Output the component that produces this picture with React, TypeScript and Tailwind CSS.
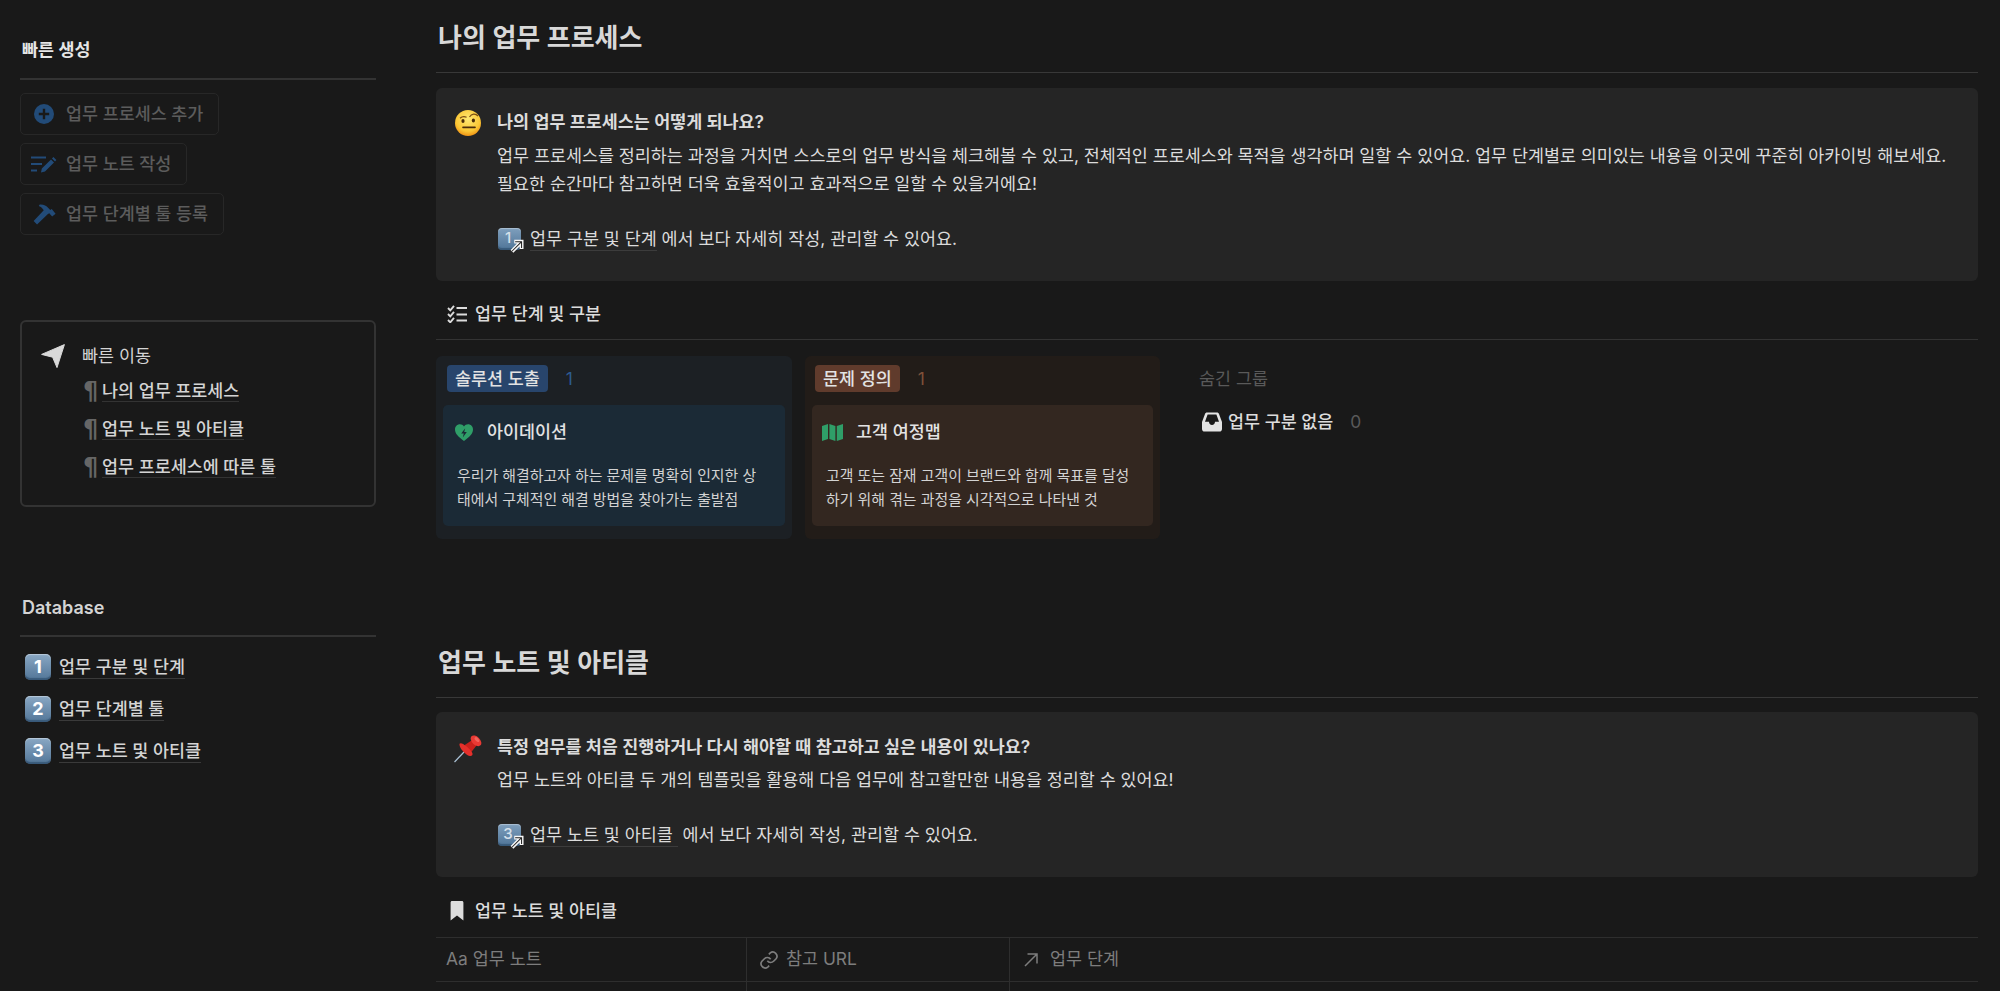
import React from "react";

const FONT = "[font-family:Inter,'Noto_Sans_CJK_KR',sans-serif]";

function Keycap({ n, small }: { n: string; small?: boolean }) {
  return (
    <span
      className={
        small
          ? "relative inline-flex h-[22px] w-[23px] shrink-0 items-center justify-center rounded-[4px] bg-gradient-to-b from-[#7f9fbd] to-[#4f7598] pb-[3px] pr-[3px] text-[15px] font-medium leading-none text-[#d5e0ea] shadow-[inset_0_1px_1px_rgba(255,255,255,0.35),inset_0_-2px_1px_rgba(30,60,90,0.5)]"
          : "relative inline-flex h-[26px] w-[26px] shrink-0 items-center justify-center rounded-[5px] bg-gradient-to-b from-[#8aa8c4] to-[#527698] text-[18px] font-bold leading-none text-white shadow-[inset_0_1px_1px_rgba(255,255,255,0.4),inset_0_-2px_1px_rgba(30,60,90,0.5)]"
      }
    >
      {n}
      {small && (
        <svg viewBox="0 0 14 14" className="absolute -bottom-[4px] -right-[4px] h-[16px] w-[16px]">
          <path d="M2.6 11.6 L10.4 3.8 M4.6 3.2 H11 V9.6" fill="none" stroke="#f8f8f8" strokeWidth="3.4" />
          <path d="M2.6 11.6 L10.4 3.8 M5.4 3.2 H11 V8.8" fill="none" stroke="#202020" strokeWidth="0.9" />
        </svg>
      )}
    </span>
  );
}

function PlusCircle() {
  return (
    <svg viewBox="0 0 20 20" className="h-5 w-5 shrink-0">
      <circle cx="10" cy="10" r="10" fill="#224b78" />
      <path d="M10 4.8 V15.2 M4.8 10 H15.2" stroke="#191919" strokeWidth="2.4" />
    </svg>
  );
}

function ComposeIcon() {
  return (
    <svg viewBox="0 0 26 17" className="h-[17px] w-[26px] shrink-0">
      <path d="M0 1.5 H15 M0 8 H11 M0 14.5 H6" stroke="#224b78" strokeWidth="2.2" />
      <path d="M10 16.5 L10.8 12.5 L20 3.5 L23 6.5 L14 15.6 Z M21 2.5 L22.4 1 L25.4 4 L24 5.5 Z" fill="#224b78" />
    </svg>
  );
}

function HammerIcon() {
  return (
    <svg viewBox="0 0 24 22" className="h-[21px] w-[23px] shrink-0">
      <path
        d="M7 0.5 C11 0.2 14 1.6 16 4.2 L18 6.2 L19.6 5.2 L23.6 10.2 L20 13.2 L17 9.6 L15.6 10.6 L4.2 21.6 L0.6 17.8 L11.2 6.6 L10 5 C8.8 3.4 7.6 2.4 6 2 Z"
        fill="#224b78"
      />
    </svg>
  );
}

function QuickButton({ icon, label, w }: { icon: React.ReactNode; label: string; w: string }) {
  return (
    <div className={`flex h-[42px] items-center rounded-[5px] border border-[#272727] ${w}`}>
      <div className="flex w-[45px] shrink-0 justify-center pl-[1px]">{icon}</div>
      <span className="whitespace-nowrap text-[17.4px] font-medium leading-none text-[#5c5c5c]">{label}</span>
    </div>
  );
}

function Anchor({ label }: { label: string }) {
  return (
    <div className="flex h-[38px] items-center pl-[61px]">
      <span className="w-[19px] text-[24px] font-bold leading-none text-[#666666] [font-family:'DejaVu_Sans',sans-serif]">¶</span>
      <span className="whitespace-nowrap border-b border-[#333333] text-[17.4px] font-medium leading-[21px] text-[#d4d4d4]">{label}</span>
    </div>
  );
}

function DbLink({ n, label }: { n: string; label: string }) {
  return (
    <div className="flex h-[42px] items-center pl-[5px]">
      <Keycap n={n} />
      <span className="ml-[8px] whitespace-nowrap border-b border-[#3a3a3a] text-[17.4px] font-medium leading-[22px] text-[#d4d4d4]">{label}</span>
    </div>
  );
}

function FaceEmoji() {
  return (
    <svg viewBox="0 0 26 26" className="h-[26px] w-[26px]">
      <defs>
        <radialGradient id="fg" cx="50%" cy="35%" r="65%">
          <stop offset="0%" stopColor="#fee873" />
          <stop offset="72%" stopColor="#fbc735" />
          <stop offset="100%" stopColor="#ef9315" />
        </radialGradient>
      </defs>
      <circle cx="13" cy="13" r="13" fill="url(#fg)" />
      <path d="M14.5 7 C16.5 3.6 20.5 3.2 23 6" fill="none" stroke="#7a4d14" strokeWidth="1.2" />
      <path d="M5 8.2 C7 6.4 9.5 6.4 11.6 7.2" fill="none" stroke="#7a4d14" strokeWidth="1.2" />
      <ellipse cx="8" cy="11" rx="1.6" ry="2" fill="#4b2c0a" />
      <ellipse cx="18.4" cy="10.4" rx="1.6" ry="2" fill="#4b2c0a" />
      <path d="M8 17.4 H20" stroke="#4b2c0a" strokeWidth="1.6" strokeLinecap="round" />
    </svg>
  );
}

function PinEmoji() {
  return (
    <svg viewBox="0 0 28 28" className="h-[28px] w-[28px]">
      <path d="M0.5 27 L10 17" stroke="#a9c0d4" strokeWidth="1.2" />
      <path d="M10 10.5 L17 17.5 L22.5 10.5 L17.5 5.5 Z" fill="#c9211c" />
      <path d="M5.5 8.8 C6.5 7.4 9 8.4 12 11 C15.6 14 18.4 17 18.6 19 C18.4 21.6 15.6 21.4 12.6 19.4 C8.6 16.4 5 12 5.5 8.8 Z" fill="#e5302b" />
      <ellipse cx="22" cy="5.8" rx="6.4" ry="4" transform="rotate(45 22 5.8)" fill="#ea3a34" />
      <ellipse cx="23" cy="4.6" rx="3" ry="1.6" transform="rotate(45 23 4.6)" fill="#f2645d" />
    </svg>
  );
}

function LinkLine({ n, label, trail }: { n: string; label: string; trail: string }) {
  return (
    <div className="flex h-[28px] items-center">
      <div className="flex w-[33px] shrink-0 pl-[1px]">
        <Keycap n={n} small />
      </div>
      <span className="whitespace-pre border-b border-[#3c3c3c] text-[17.4px] leading-[23px] text-[#dcdcdc]">{label}</span>
      <span className="whitespace-pre text-[17.4px] leading-[28px] text-[#dcdcdc]">{trail}</span>
    </div>
  );
}

function ChecklistIcon() {
  return (
    <svg viewBox="0 0 20 18" className="h-[18px] w-[20px]">
      <g fill="none" stroke="#dcdcdc" strokeWidth="1.9">
        <path d="M1 3 L3.3 5.3 L7 0.8" />
        <path d="M1 9 L3.3 11.3 L7 6.8" />
        <path d="M1 15 L3.3 17.3 L7 12.8" />
        <path d="M9.5 3 H20 M9.5 9.5 H20 M9.5 15.5 H20" />
      </g>
    </svg>
  );
}

function BookmarkIcon() {
  return (
    <svg viewBox="0 0 14 20" className="h-[20px] w-[14px]">
      <path d="M0.6 1.5 C0.6 0.6 1.2 0 2 0 H12 C12.8 0 13.4 0.6 13.4 1.5 V19.6 L7 14.6 L0.6 19.6 Z" fill="#dcdcdc" />
    </svg>
  );
}

function HeartBolt() {
  return (
    <svg viewBox="0 0 18 17" className="h-[17px] w-[18px]">
      <path d="M9 17 C3.5 12.8 0 9.6 0 5.4 C0 2.4 2.2 0.2 4.9 0.2 C6.6 0.2 8.1 1.1 9 2.5 C9.9 1.1 11.4 0.2 13.1 0.2 C15.8 0.2 18 2.4 18 5.4 C18 9.6 14.5 12.8 9 17 Z" fill="#2f9e68" />
      <path d="M10.2 4.2 L6.2 9.6 H8.8 L7.8 13.4 L11.8 8 H9.2 Z" fill="#1b2a36" />
    </svg>
  );
}

function MapIcon() {
  return (
    <svg viewBox="0 0 21 17" className="-ml-[2px] h-[17px] w-[21px]">
      <path d="M0 2 L6 0 V15 L0 17 Z M7.4 0 L13.4 2 V17 L7.4 15 Z M14.8 2 L21 0 V15 L14.8 17 Z" fill="#2f9e68" />
    </svg>
  );
}

function InboxIcon() {
  return (
    <svg viewBox="0 0 20 20" className="h-[20px] w-[20px]">
      <path
        fillRule="evenodd"
        d="M5 0.5 H15 C16 0.5 16.6 1 17 2 L20 10 V17 C20 18.6 18.8 19.6 17.4 19.6 H2.6 C1.2 19.6 0 18.6 0 17 V10 L3 2 C3.4 1 4 0.5 5 0.5 Z M5.6 2.6 L3 9.8 H7 C7 11.6 8.2 13 10 13 C11.8 13 13 11.6 13 9.8 H17 L14.4 2.6 Z"
        fill="#e3e3e3"
      />
    </svg>
  );
}

function Tag({ label, cls }: { label: string; cls: string }) {
  return (
    <span className={`inline-flex h-[27px] items-center rounded-[4px] px-[8px] text-[17.4px] font-medium leading-none ${cls}`}>
      {label}
    </span>
  );
}

function BoardColumn(p: {
  wrap: string;
  tagCls: string;
  tag: string;
  count: string;
  countCls: string;
  card: string;
  icon: React.ReactNode;
  title: string;
  l1: string;
  l2: string;
  tagPad: string;
  countPad: string;
}) {
  return (
    <div className={`h-[183px] rounded-[6px] pt-[9px] ${p.wrap}`}>
      <div className={`flex h-[27px] items-center ${p.tagPad}`}>
        <Tag label={p.tag} cls={p.tagCls} />
        <span className={`${p.countPad} text-[17.4px] leading-none ${p.countCls}`}>{p.count}</span>
      </div>
      <div className={`mx-[7px] mt-[13px] h-[121px] rounded-[5px] ${p.card}`}>
        <div className="flex h-[53px] items-center pl-[12px] pt-[1px]">
          <div className="flex w-[32px] shrink-0">{p.icon}</div>
          <span className="text-[17.4px] font-medium leading-none text-[#e3e3e3]">{p.title}</span>
        </div>
        <div className="pl-[14px] pt-[6px] text-[14.9px] leading-[24px] text-[#d3d3d3]">
          <div className="whitespace-nowrap">{p.l1}</div>
          <div className="whitespace-nowrap">{p.l2}</div>
        </div>
      </div>
    </div>
  );
}

function HeaderCell({ w, icon, label }: { w: string; icon: React.ReactNode; label: string }) {
  return (
    <div className={`flex h-[43px] items-center border-r border-[#2e2e2e] text-[17.4px] text-[#7d7d7d] ${w}`}>
      {icon}
      <span>{label}</span>
    </div>
  );
}

export default function App() {
  return (
    <div className={`flex h-[991px] w-[2000px] overflow-hidden bg-[#191919] ${FONT}`}>
      {/* sidebar */}
      <aside className="w-[436px] shrink-0 pl-[20px]">
        <div className="w-[356px]">
          <div className="flex h-[80px] items-end border-b-2 border-[#333333] pb-[17px] pl-[2px]">
            <span className="text-[17.4px] font-semibold leading-[22px] text-[#e6e6e6]">빠른 생성</span>
          </div>
          <div className="mt-[13px] flex flex-col gap-[8px]">
            <QuickButton icon={<PlusCircle />} label="업무 프로세스 추가" w="w-[199px]" />
            <QuickButton icon={<ComposeIcon />} label="업무 노트 작성" w="w-[167px]" />
            <QuickButton icon={<HammerIcon />} label="업무 단계별 툴 등록" w="w-[204px]" />
          </div>

          <div className="mt-[85px] h-[187px] rounded-[6px] border-2 border-[#333333] pt-[20px]">
            <div className="flex h-[28px] items-center pl-[19px]">
              <svg viewBox="0 0 24 24" className="h-[24px] w-[24px] shrink-0">
                <path d="M23.4 0.6 L0.6 10.4 L11.6 13.2 L16 23.6 Z" fill="#d9d9d9" stroke="#d9d9d9" strokeLinejoin="round" strokeWidth="1" />
              </svg>
              <span className="ml-[17px] text-[17.4px] leading-none text-[#d4d4d4]">빠른 이동</span>
            </div>
            <div className="mt-[2px]">
              <Anchor label="나의 업무 프로세스" />
              <Anchor label="업무 노트 및 아티클" />
              <Anchor label="업무 프로세스에 따른 툴" />
            </div>
          </div>

          <div className="mt-[85px] flex h-[45px] items-end border-b-2 border-[#333333] pb-[16px] pl-[2px]">
            <span className="text-[18px] font-semibold leading-[22px] text-[#d4d4d4]">Database</span>
          </div>
          <div className="mt-[9px]">
            <DbLink n="1" label="업무 구분 및 단계" />
            <DbLink n="2" label="업무 단계별 툴" />
            <DbLink n="3" label="업무 노트 및 아티클" />
          </div>
        </div>
      </aside>

      {/* main */}
      <main className="w-[1542px] shrink-0">
        <div className="flex h-[73px] items-end border-b border-[#383838] pb-[16px] pl-[2px]">
          <h1 className="text-[26px] font-semibold leading-[36px] text-[#d8d8d8]">나의 업무 프로세스</h1>
        </div>

        <section className="mt-[15px] h-[193px] rounded-[6px] bg-[#252525] pt-[20px]">
          <div className="flex">
            <div className="w-[61px] shrink-0 pl-[19px] pt-[2px]">
              <FaceEmoji />
            </div>
            <div className="text-[17.4px] text-[#dcdcdc]">
              <div className="font-semibold leading-[28px]">나의 업무 프로세스는 어떻게 되나요?</div>
              <div className="mt-[6px] whitespace-nowrap leading-[28px]">
                업무 프로세스를 정리하는 과정을 거치면 스스로의 업무 방식을 체크해볼 수 있고, 전체적인 프로세스와 목적을 생각하며 일할 수 있어요. 업무 단계별로 의미있는 내용을 이곳에 꾸준히 아카이빙 해보세요.
              </div>
              <div className="whitespace-nowrap leading-[28px]">
                필요한 순간마다 참고하면 더욱 효율적이고 효과적으로 일할 수 있을거에요!
              </div>
              <div className="h-[27px]" />
              <LinkLine n="1" label="업무 구분 및 단계" trail=" 에서 보다 자세히 작성, 관리할 수 있어요." />
            </div>
          </div>
        </section>

        <div className="mt-[19px] flex h-[40px] items-start border-b border-[#333333] pl-[11px]">
          <div className="flex h-[28px] items-center">
            <div className="w-[28px]">
              <ChecklistIcon />
            </div>
            <span className="text-[17.4px] font-medium leading-none text-[#dcdcdc]">업무 단계 및 구분</span>
          </div>
        </div>

        <div className="mt-[16px] flex h-[183px]">
          <BoardColumn
            wrap="w-[356px] bg-[#1c2024]"
            tagCls="bg-[#28456c] text-[#e3e3e3]"
            tag="솔루션 도출"
            count="1"
            countCls="text-[#2c5a8f]"
            card="bg-[#1b2a36]"
            icon={<HeartBolt />}
            title="아이데이션"
            l1="우리가 해결하고자 하는 문제를 명확히 인지한 상"
            l2="태에서 구체적인 해결 방법을 찾아가는 출발점"
            tagPad="pl-[11px]"
            countPad="ml-[18px]"
          />
          <div className="w-[13px]" />
          <BoardColumn
            wrap="w-[355px] bg-[#221c18]"
            tagCls="bg-[#603b2c] text-[#e3e3e3]"
            tag="문제 정의"
            count="1"
            countCls="text-[#7e5039]"
            card="bg-[#332720]"
            icon={<MapIcon />}
            title="고객 여정맵"
            l1="고객 또는 잠재 고객이 브랜드와 함께 목표를 달성"
            l2="하기 위해 겪는 과정을 시각적으로 나타낸 것"
            tagPad="pl-[10px]"
            countPad="ml-[18px]"
          />
          <div className="ml-[39px] pt-[9px]">
            <div className="flex h-[27px] items-center text-[17.4px] leading-none text-[#5a5a5a]">숨긴 그룹</div>
            <div className="mt-[16px] flex h-[28px] items-center pl-[3px]">
              <InboxIcon />
              <span className="ml-[6px] text-[17.4px] font-medium leading-none text-[#dcdcdc]">업무 구분 없음</span>
              <span className="ml-[17px] text-[17.4px] leading-none text-[#5a5a5a]">0</span>
            </div>
          </div>
        </div>

        <div className="mt-[109px] flex h-[50px] items-end border-b border-[#383838] pb-[16px] pl-[2px]">
          <h2 className="text-[26px] font-semibold leading-[36px] text-[#d8d8d8]">업무 노트 및 아티클</h2>
        </div>

        <section className="mt-[14px] h-[165px] rounded-[6px] bg-[#252525] pt-[21px]">
          <div className="flex">
            <div className="w-[61px] shrink-0 pl-[18px] pt-[2px]">
              <PinEmoji />
            </div>
            <div className="text-[17.4px] text-[#dcdcdc]">
              <div className="font-semibold leading-[28px]">특정 업무를 처음 진행하거나 다시 해야할 때 참고하고 싶은 내용이 있나요?</div>
              <div className="mt-[5px] whitespace-nowrap leading-[28px]">
                업무 노트와 아티클 두 개의 템플릿을 활용해 다음 업무에 참고할만한 내용을 정리할 수 있어요!
              </div>
              <div className="h-[27px]" />
              <LinkLine n="3" label="업무 노트 및 아티클 " trail=" 에서 보다 자세히 작성, 관리할 수 있어요." />
            </div>
          </div>
        </section>

        <div className="mt-[20px] flex h-[28px] items-center pl-[14px]">
          <div className="w-[25px]">
            <BookmarkIcon />
          </div>
          <span className="text-[17.4px] font-medium leading-none text-[#dcdcdc]">업무 노트 및 아티클</span>
        </div>

        <div className="mt-[12px] border-y border-[#2e2e2e]">
          <div className="flex">
            <HeaderCell w="w-[311px] pl-[10px]" icon={<span className="mr-[5px] text-[#7d7d7d]">Aa</span>} label="업무 노트" />
            <HeaderCell
              w="w-[263px] pl-[12px]"
              icon={
                <svg viewBox="0 0 24 24" className="mr-[7px] h-[20px] w-[20px]" fill="none" stroke="#7d7d7d" strokeWidth="2">
                  <path d="M10 13a5 5 0 0 0 7.5.5l3-3a5 5 0 0 0-7-7l-1.7 1.7" />
                  <path d="M14 11a5 5 0 0 0-7.5-.5l-3 3a5 5 0 0 0 7 7l1.7-1.7" />
                </svg>
              }
              label="참고 URL"
            />
            <div className="flex h-[43px] items-center pl-[13px] text-[17.4px] text-[#7d7d7d]">
              <svg viewBox="0 0 16 16" className="mr-[11px] h-[16px] w-[16px]" fill="none" stroke="#7d7d7d" strokeWidth="1.5">
                <path d="M2 14 L14 2 M4.5 2 H14 V11.5" />
              </svg>
              <span>업무 단계</span>
            </div>
          </div>
        </div>
        <div className="flex h-[20px]">
          <div className="w-[311px] border-r border-[#2e2e2e]" />
          <div className="w-[263px] border-r border-[#2e2e2e]" />
        </div>
      </main>
    </div>
  );
}
